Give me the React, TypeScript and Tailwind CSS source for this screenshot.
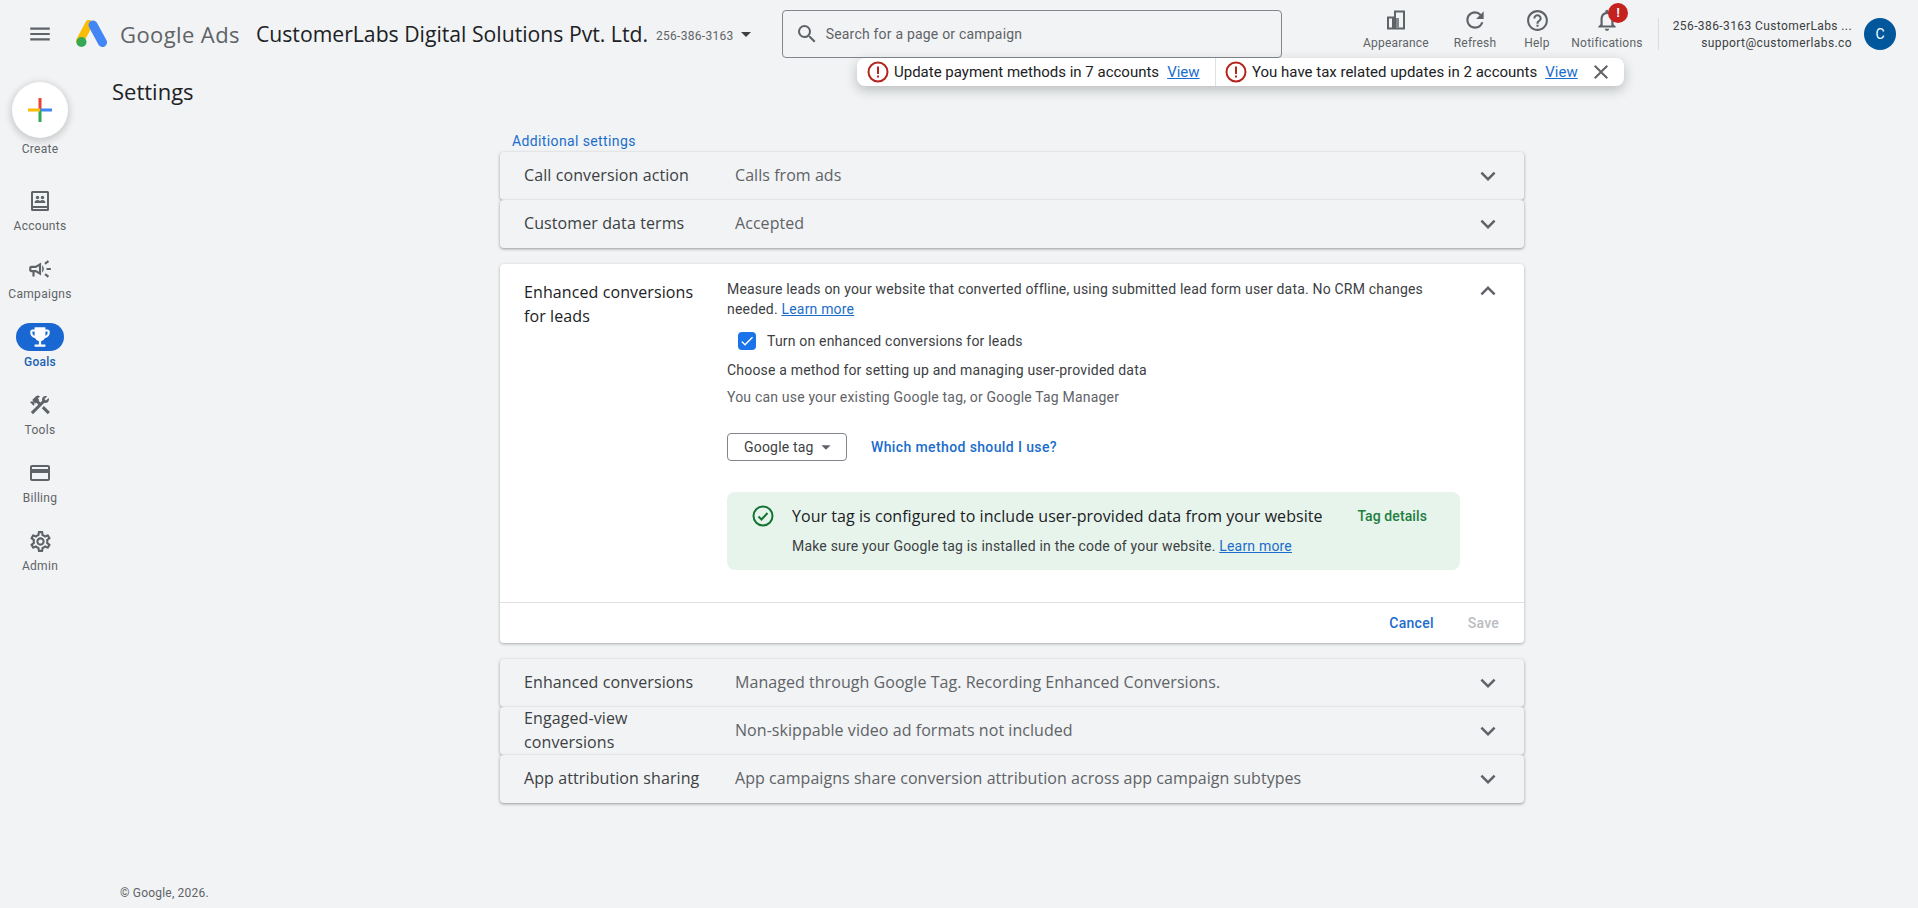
import React from 'react';
import {
  MdMenu,
  MdSearch,
  MdRefresh,
  MdHelpOutline,
  MdNotificationsNone,
  MdClose,
  MdExpandMore,
  MdExpandLess,
  MdArrowDropDown,
  MdOutlineCampaign,
  MdEmojiEvents,
  MdConstruction,
  MdCreditCard,
  MdOutlineSettings,
  MdCheck,
} from 'react-icons/md';

const roboto = "font-['Roboto',sans-serif]";
const heading = "font-['Open_Sans',sans-serif]";

const AdsLogo = () => (
  <svg width="34" height="28" viewBox="0 0 34 28">
    <path d="M13 4 L4 21" stroke="#fbbc04" strokeWidth="8" strokeLinecap="round" />
    <path d="M17 5 L26.500 22.500" stroke="#4285f4" strokeWidth="9" strokeLinecap="round" />
    <circle cx="5.500" cy="22" r="5" fill="#34a853" />
  </svg>
);

const CreatePlus = () => (
  <svg width="24" height="24" viewBox="0 0 24 24">
    <rect x="10.500" y="0" width="3" height="12" fill="#ea4335" />
    <rect x="12" y="10.500" width="12" height="3" fill="#4285f4" />
    <rect x="10.500" y="12" width="3" height="12" fill="#34a853" />
    <rect x="0" y="10.500" width="12" height="3" fill="#fbbc04" />
  </svg>
);

const AccountsIcon = () => (
  <svg width="24" height="24" viewBox="0 0 24 24" fill="#5f6368">
    <path d="M4.500 2h15A1.500 1.500 0 0 1 21 3.500v17a1.500 1.500 0 0 1-1.500 1.500h-15A1.500 1.500 0 0 1 3 20.500v-17A1.500 1.500 0 0 1 4.500 2Zm.5 2v13h14V4H5Zm0 15v1h14v-1H5Z" fillRule="evenodd" />
    <circle cx="9.500" cy="8.500" r="1.700" />
    <circle cx="14.500" cy="8.500" r="1.700" />
    <path d="M6.500 14c0-1.700 1.500-3 3-3 .9 0 1.800.4 2.500 1 .7-.6 1.600-1 2.500-1 1.500 0 3 1.300 3 3h-11Z" />
  </svg>
);

const AppearanceIcon = () => (
  <svg width="24" height="24" viewBox="0 0 24 24">
    <path d="M10 2.500h11v19H3v-13h7v-6Zm2 2v15h7v-15h-7Zm-7 6v9h3v-9H5Z" fill="#5f6368" fillRule="evenodd" />
    <rect x="10" y="10.500" width="2" height="9" fill="#5f6368" />
    <rect x="12" y="10" width="3" height="9.500" fill="#5f6368" opacity="0.75" />
  </svg>
);

const ErrorBadge = () => (
  <svg width="22" height="22" viewBox="0 0 22 22" className="shrink-0">
    <circle cx="11" cy="11" r="9.500" fill="none" stroke="#b3261e" strokeWidth="2" />
    <rect x="10" y="5.500" width="2" height="7.500" fill="#b3261e" />
    <rect x="10" y="14.500" width="2" height="2" fill="#b3261e" />
  </svg>
);

const navItems = [
  { label: 'Accounts', icon: <AccountsIcon /> },
  { label: 'Campaigns', icon: <MdOutlineCampaign size={26} color="#5f6368" /> },
  { label: 'Goals', icon: <MdEmojiEvents size={26} color="#fff" />, active: true },
  { label: 'Tools', icon: <MdConstruction size={24} color="#5f6368" /> },
  { label: 'Billing', icon: <MdCreditCard size={24} color="#5f6368" /> },
  { label: 'Admin', icon: <MdOutlineSettings size={25} color="#5f6368" /> },
];

const Sidebar = () => (
  <nav className={`w-20 shrink-0 flex flex-col items-center tracking-[0.3px] ${roboto}`}>
    <div className="mt-[14px] w-14 h-14 rounded-full bg-white shadow-[0_2px_6px_2px_rgba(60,64,67,0.2)] flex items-center justify-center">
      <CreatePlus />
    </div>
    <span className="mt-[3px] h-4 text-xs leading-4 text-[#5f6368]">Create</span>
    <div className="mt-[30px] flex flex-col">
      {navItems.map((item) => (
        <div key={item.label} className="h-[68px] flex flex-col items-center">
          {item.active ? (
            <div className="w-12 h-7 rounded-full bg-[#1967d2] flex items-center justify-center">{item.icon}</div>
          ) : (
            <div className="h-7 flex items-center justify-center">{item.icon}</div>
          )}
          <span className={`mt-[3px] text-xs leading-4 ${item.active ? 'text-[#1a5fb4] font-medium' : 'text-[#5f6368]'}`}>
            {item.label}
          </span>
        </div>
      ))}
    </div>
  </nav>
);

const HeaderAction = ({ label, icon, className }: { label: string; icon: React.ReactNode; className: string }) => (
  <div className={`relative flex flex-col items-center ${className}`}>
    <div className="h-6 flex items-center justify-center">{icon}</div>
    <span className="mt-[3px] text-xs leading-4 tracking-[0.2px] text-[#5f6368] whitespace-nowrap">{label}</span>
  </div>
);

const Header = () => (
  <header className={`h-[68px] flex items-start ${roboto}`}>
    <div className="w-20 h-[68px] flex items-center justify-center shrink-0">
      <MdMenu size={26} color="#5f6368" />
    </div>
    <div className="h-[68px] flex items-center">
      <div className="-ml-1">
        <AdsLogo />
      </div>
      <span className={`ml-[10px] text-[22px] tracking-[0.4px] text-[#5f6368] whitespace-nowrap ${heading}`}>Google Ads</span>
      <span className={`ml-[16px] text-[21.2px] text-[#202124] whitespace-nowrap ${heading}`}>
        CustomerLabs Digital Solutions Pvt. Ltd.
      </span>
      <span className="ml-[8px] mt-[4px] text-xs tracking-[0.3px] text-[#5f6368] whitespace-nowrap">256-386-3163</span>
      <MdArrowDropDown size={24} color="#3c4043" />
    </div>
    <div className="ml-[24px] mt-[10px] w-[500px] h-12 rounded border border-[#80868b] flex items-center pl-[12px]">
      <MdSearch size={24} color="#5f6368" />
      <span className="ml-[7px] text-sm tracking-[0.2px] text-[#5f6368]">Search for a page or campaign</span>
    </div>
    <div className="ml-auto mt-[8px] flex items-start">
      <HeaderAction label="Appearance" icon={<AppearanceIcon />} className="w-[80px] mr-0" />
      <HeaderAction label="Refresh" icon={<MdRefresh size={26} color="#5f6368" />} className="w-[60px] ml-[9px]" />
      <HeaderAction label="Help" icon={<MdHelpOutline size={25} color="#5f6368" />} className="w-[40px] ml-[12px]" />
      <HeaderAction
        label="Notifications"
        icon={
          <>
            <MdNotificationsNone size={26} color="#5f6368" />
            <span className="absolute -top-[5px] left-[41px] w-5 h-5 rounded-full bg-[#c5221f] text-white text-xs font-bold flex items-center justify-center">
              !
            </span>
          </>
        }
        className="w-[80px] ml-[10px]"
      />
      <div className="ml-[11px] mt-[10px] h-8 border-l border-[#dadce0]" />
      <div className="ml-[8px] w-[185px] mt-[10px] text-right text-xs leading-[17px] text-[#3c4043] tracking-[0.4px]">
        <div className="whitespace-nowrap">256-386-3163 CustomerLabs ...</div>
        <div>support@customerlabs.co</div>
      </div>
      <div className="ml-[12px] mr-[22px] mt-[10px] w-8 h-8 rounded-full bg-[#00579b] text-white text-sm flex items-center justify-center">
        C
      </div>
    </div>
  </header>
);

// the floating notices overlap the header and the page
const NoticeBar = () => (
  <div className={`absolute left-[857px] top-[58px] w-[767px] h-7 rounded-lg bg-white shadow-[0_4px_12px_rgba(60,64,67,0.3)] flex items-center text-[15px] text-[#202124] ${roboto}`}>
    <div className="w-[359px] h-full flex items-center pl-[10px] border-r border-[#e0e0e0]">
      <ErrorBadge />
      <span className="ml-[5px]">Update payment methods in 7 accounts</span>
      <span className="ml-[8px] text-[#1a6dcc] underline">View</span>
    </div>
    <div className="flex items-center pl-[9px]">
      <ErrorBadge />
      <span className="ml-[5px]">You have tax related updates in 2 accounts</span>
      <span className="ml-[8px] text-[#1a6dcc] underline">View</span>
      <MdClose size={24} color="#5f6368" className="ml-[11px]" />
    </div>
  </div>
);

const Row = ({ title, value }: { title: string; value: string }) => (
  <div className="h-12 rounded bg-[#f1f3f4] shadow-[0_1px_3px_rgba(60,64,67,0.5)] flex items-center">
    <div className={`w-[235px] pl-6 pr-6 pb-[2px] text-base tracking-[0.1px] leading-6 text-[#3c4043] shrink-0 ${heading}`}>{title}</div>
    <div className={`flex-1 pb-[2px] text-base tracking-[0.05px] text-[#5f6368] ${heading}`}>{value}</div>
    <MdExpandMore size={30} color="#5f6368" className="mr-[21px]" />
  </div>
);

const ExpandedCard = () => (
  <div className="mt-4 rounded bg-white shadow-[0_1px_3px_rgba(60,64,67,0.4)]">
    <div className="h-[338px] flex items-start">
      <div className={`w-[227px] shrink-0 pl-6 pr-4 pt-4 text-base tracking-[0.1px] leading-6 text-[#202124] ${heading}`}>
        Enhanced conversions for leads
      </div>
      <div className={`w-[733px] shrink-0 tracking-[0.19px] ${roboto}`}>
        <p className="mt-[15px] max-w-[710px] text-sm leading-5 text-[#3c4043]">
          Measure leads on your website that converted offline, using submitted lead form user data. No CRM changes
          needed. <span className="text-[#1a6dcc] underline">Learn more</span>
        </p>
        <div className="mt-3 ml-[11px] flex items-center">
          <div className="w-[18px] h-[18px] rounded-sm bg-[#1a73e8] flex items-center justify-center">
            <MdCheck size={16} color="#fff" />
          </div>
          <span className="ml-[11px] text-sm leading-5 text-[#3c4043]">Turn on enhanced conversions for leads</span>
        </div>
        <p className="mt-[9px] text-sm leading-5 text-[#3c4043]">Choose a method for setting up and managing user-provided data</p>
        <p className="mt-[7px] text-sm leading-5 text-[#5f6368]">You can use your existing Google tag, or Google Tag Manager</p>
        <div className="mt-[26px] flex items-center">
          <div className="w-[120px] h-7 rounded border border-[#80868b] flex items-center pl-[16px] text-sm text-[#3c4043]">
            Google tag
            <MdArrowDropDown size={22} color="#5f6368" className="ml-px" />
          </div>
          <span className="ml-6 text-sm font-medium tracking-[0.38px] text-[#1a6dcc]">Which method should I use?</span>
        </div>
        <div className="mt-[31px] h-[78px] rounded-lg bg-[#e7f4ec] flex items-start pl-6 pt-[12px]">
          <svg width="24" height="24" viewBox="0 0 24 24" className="shrink-0" fill="none" stroke="#137333" strokeWidth="2">
            <circle cx="12" cy="12" r="9.500" />
            <path d="M7.500 12.500 10.500 15.500 16.500 9" />
          </svg>
          <div className="ml-[17px] flex-1">
            <div className="flex items-center h-6">
              <span className={`text-base tracking-[0.05px] text-[#202124] whitespace-nowrap ${heading}`}>
                Your tag is configured to include user-provided data from your website
              </span>
              <span className="ml-auto mr-[33px] text-sm font-medium tracking-[0.1px] text-[#1e7e3e]">Tag details</span>
            </div>
            <div className="mt-[8px] text-sm leading-5 text-[#3c4043]">
              Make sure your Google tag is installed in the code of your website.{' '}
              <span className="text-[#1a6dcc] underline">Learn more</span>
            </div>
          </div>
        </div>
      </div>
      <MdExpandLess size={30} color="#5f6368" className="ml-[13px] mt-[12px]" />
    </div>
    <div className={`h-[41px] border-t border-[#e0e0e0] flex items-center justify-end pr-[25px] text-sm font-medium tracking-[0.25px] ${roboto}`}>
      <span className="text-[#1a6dcc]">Cancel</span>
      <span className="ml-[34px] text-[#b9bcc0]">Save</span>
    </div>
  </div>
);

const App = () => (
  <div className="relative w-[1918px] h-[908px] overflow-hidden bg-[#f1f3f4]">
    <Header />
    <NoticeBar />
    <div className="flex">
      <Sidebar />
      <main className="flex-1 flex flex-col">
        <h1 className={`ml-[32px] mt-[9px] h-[29px] text-[22px] leading-7 text-[#202124] ${heading}`}>Settings</h1>
        <div className="ml-[420px] w-[1024px]">
          <div className={`ml-3 mt-[26px] h-5 text-sm leading-[18px] tracking-[0.38px] text-[#1a6dcc] ${roboto}`}>Additional settings</div>
          <Row title="Call conversion action" value="Calls from ads" />
          <Row title="Customer data terms" value="Accepted" />
          <ExpandedCard />
          <div className="mt-4">
            <Row title="Enhanced conversions" value="Managed through Google Tag. Recording Enhanced Conversions." />
            <Row title="Engaged-view conversions" value="Non-skippable video ad formats not included" />
            <Row title="App attribution sharing" value="App campaigns share conversion attribution across app campaign subtypes" />
          </div>
        </div>
        <div className={`ml-[40px] mt-[82px] text-xs leading-4 tracking-[0.2px] text-[#5f6368] ${roboto}`}>© Google, 2026.</div>
      </main>
    </div>
  </div>
);

export default App;
